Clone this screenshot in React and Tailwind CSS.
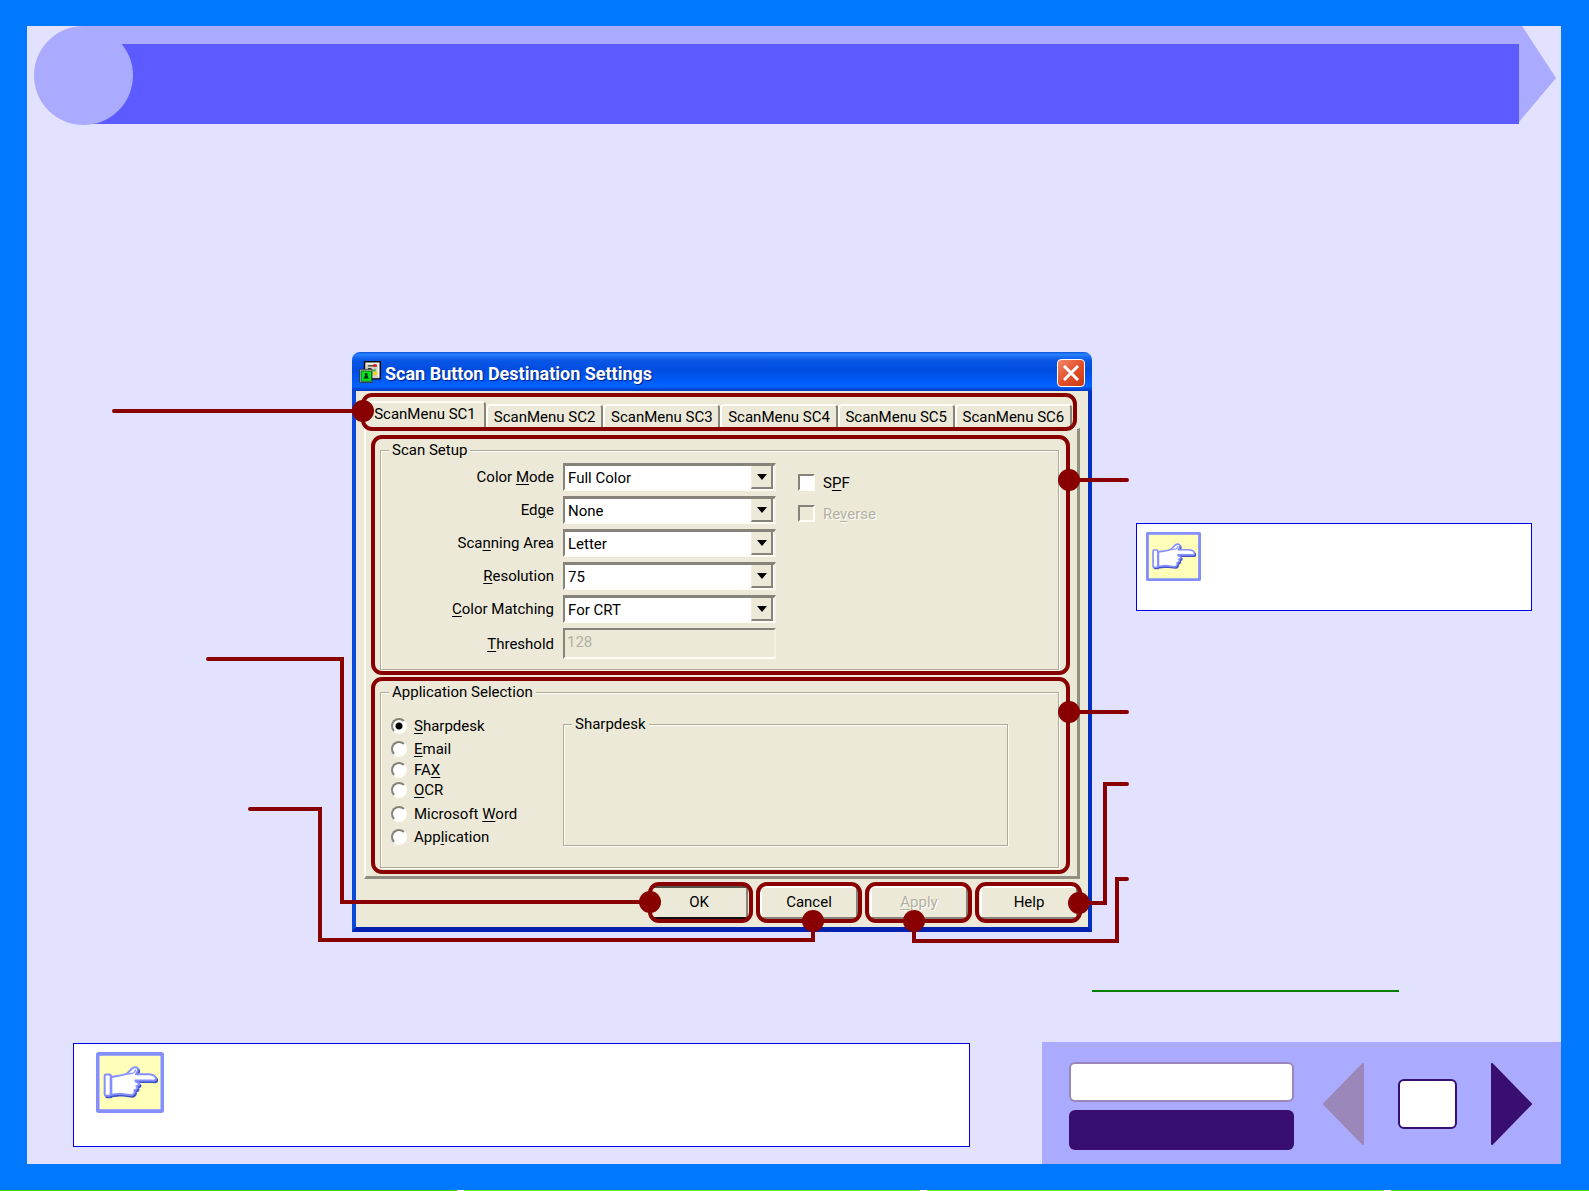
import React, { useState } from "react";

const FONT = "font-['Roboto','Liberation_Sans',sans-serif]";
const ETCHED =
  "border border-[#aeab9b] shadow-[1px_1px_0_#fffdf6,inset_1px_1px_0_#fffdf6]";

function Mnemonic({ text }) {
  const [before, key, after] = text.split("|");
  return (
    <span className="whitespace-pre">
      {before}
      <span className="underline decoration-1 underline-offset-2">{key}</span>
      {after}
    </span>
  );
}

function PointingHand({ className }) {
  const hand =
    "M154 140 C172 137 186 136 200 131 L216 115 C222 109 233 110 234 117 C234 123 231 127 228 132 L268 132 C282 134 288 140 288 146 C288 152 281 152 274 151 L226 151 C227 157 238 157 238 161 C238 166 233 167 229 168 C234 172 234 178 223 180 C227 185 222 195 214 195 L180 191 L154 194 Z";
  return (
    <svg viewBox="108 66 204 182" className={className} aria-hidden="true">
      <rect x="113" y="71" width="194" height="172" rx="3" fill="#ffffb9" stroke="#838eff" strokeWidth="11" />
      <g transform="translate(4 5)" fill="#3f52c4" stroke="#3f52c4" strokeWidth="5" strokeLinejoin="round">
        <path d={hand} />
        <rect x="134" y="133" width="17" height="64" rx="4" />
      </g>
      <g fill="#fff" stroke="#838eff" strokeWidth="6" strokeLinejoin="round">
        <path d={hand} />
        <rect x="134" y="133" width="18" height="64" rx="4" />
        <path d="M202 132 L213 130 C220 130 226 124 227 118" fill="none" strokeWidth="4" />
      </g>
    </svg>
  );
}

function AppIcon() {
  return (
    <svg viewBox="0 0 64 64" className="size-[22px]" aria-hidden="true">
      <rect x="16" y="2" width="46" height="50" fill="#d4d2c4" stroke="#0a0a0a" strokeWidth="4" />
      <path d="M22 8h34v38" stroke="#fff" strokeWidth="3" fill="none" />
      <path d="M26 14h26M26 22h10" stroke="#333" strokeWidth="4" />
      <rect x="42" y="9" width="9" height="8" fill="#e02020" />
      <path d="M38 28l10-6v11z" fill="#1fb81f" />
      <circle cx="47" cy="36" r="6" fill="#f2d21a" />
      <rect x="2" y="24" width="36" height="38" fill="#c9c7c0" stroke="#222" strokeWidth="2" />
      <rect x="6" y="29" width="30" height="30" fill="#08e022" stroke="#064d0c" strokeWidth="2" />
      <path d="M21 35a4 4 0 0 1 3 7l5 9H13l5-9a4 4 0 0 1 3-7z" fill="#042f06" />
    </svg>
  );
}

function ComboRow({ id, label, value }) {
  return (
    <>
      <label htmlFor={id} className="justify-self-end">
        <Mnemonic text={label} />
      </label>
      <div className="relative">
        <select
          id={id}
          defaultValue={value}
          className="block h-7 w-full appearance-none rounded-none border-2 border-t-[3px] border-r-[#f7f2e8] border-b-[#fffdf6] border-l-[#86837a] border-t-[#86837a] bg-white pl-[3px] text-[15px] leading-5 text-black outline-none"
        >
          <option>{value}</option>
        </select>
        <span className="pointer-events-none absolute top-[3px] right-[3px] flex h-[23px] w-[22px] items-center justify-center border-r-2 border-b-2 border-l border-l-[#f7e9dc] border-r-[#86837a] border-b-[#86837a] bg-[#ece9d8]">
          <svg viewBox="0 0 10 6" className="h-[6px] w-[10px]" aria-hidden="true">
            <path d="M0 0h10L5 6z" fill="#000" />
          </svg>
        </span>
      </div>
    </>
  );
}

function CheckRow({ label, disabled }) {
  return (
    <label
      className={
        "flex h-[31px] items-center gap-2 " +
        (disabled ? "text-[#b3b0a0] [text-shadow:1px_1px_0_#fff]" : "text-black")
      }
    >
      <input
        type="checkbox"
        disabled={disabled}
        className="size-[17px] appearance-none border-2 border-t-[#86837a] border-r-[#fffdf6] border-b-[#fffdf6] border-l-[#86837a] bg-white disabled:bg-[#ece9d8]"
      />
      <Mnemonic text={label} />
    </label>
  );
}

const COMBOS = [
  ["color-mode", "Color |M|ode", "Full Color"],
  ["edge", "Ed|g|e", "None"],
  ["area", "Sca|n|ning Area", "Letter"],
  ["resolution", "|R|esolution", "75"],
  ["matching", "|C|olor Matching", "For CRT"],
];

const APPS = [
  ["|S|harpdesk", "h-[23px]"],
  ["|E|mail", "h-[23px]"],
  ["FA|X|", "h-5"],
  ["|O|CR", "h-5"],
  ["Microsoft |W|ord", "mt-0.5 h-[23px]"],
  ["App|l|ication", "h-[23px]"],
];

const TABS = ["SC1", "SC2", "SC3", "SC4", "SC5", "SC6"];

function DialogButton({ children, primary, disabled }) {
  return (
    <button
      type="button"
      disabled={disabled}
      className={
        "flex h-[33px] w-[98px] items-center justify-center border-2 border-r-[#86837a] border-l-white bg-[#ece9d8] pb-0.5 text-[15px] " +
        (primary ? "border-t-[#55524a] border-b-[#111] " : "border-t-white border-b-[#86837a] ") +
        (disabled ? "text-[#b3b0a0] [text-shadow:1px_1px_0_#fff]" : "text-black")
      }
    >
      {children}
    </button>
  );
}

/* Outlines, dots and leader lines that point from the dialog to its notes. */
function Callouts() {
  return (
    <svg className="pointer-events-none absolute top-0 left-0 h-full w-full overflow-visible" aria-hidden="true">
      <g transform="translate(-352 -352)" fill="none" stroke="#880000" strokeWidth="4" strokeLinecap="round">
        <rect x="363" y="395" width="712" height="34" rx="9" />
        <rect x="373" y="437" width="695" height="236" rx="9" />
        <rect x="373" y="679" width="695" height="193" rx="9" />
        <rect x="650" y="884" width="101" height="37" rx="9" />
        <rect x="758" y="884" width="102" height="37" rx="9" />
        <rect x="867" y="884" width="103" height="37" rx="9" />
        <rect x="977" y="884" width="103" height="37" rx="9" />
        <path d="M114 411H363M1069 480H1127M1069 712H1127" />
        <path d="M208 659H342V902H650" />
        <path d="M250 809H320V940H813V921" />
        <path d="M914 921V941H1117V879H1127" />
        <path d="M1079 903H1105V784H1127" />
        <g fill="#880000" stroke="none">
          <circle cx="363" cy="411" r="11" />
          <circle cx="1069" cy="480" r="11" />
          <circle cx="1069" cy="712" r="11" />
          <circle cx="650" cy="902" r="11" />
          <circle cx="813" cy="921" r="11" />
          <circle cx="914" cy="921" r="11" />
          <circle cx="1079" cy="903" r="11" />
        </g>
      </g>
    </svg>
  );
}

function SettingsDialog() {
  const [tab, setTab] = useState(0);
  return (
    <div className={"relative w-[740px] shrink-0 text-[15px] leading-5 text-black " + FONT}>
      <div className="flex h-[39px] items-center gap-1 rounded-t-lg bg-[linear-gradient(180deg,#0a55d8_0%,#2a80ff_6%,#0a58e6_20%,#004ce0_45%,#0058f6_70%,#0064ff_88%,#0038c0_100%)] px-[7px]">
        <AppIcon />
        <h1 className="flex-1 pt-1 text-[18px] leading-6 font-bold text-white [text-shadow:1px_1px_1px_#0a1e80]">
          Scan Button Destination Settings
        </h1>
        <button
          type="button"
          aria-label="Close"
          className="mt-0.5 flex size-7 items-center justify-center rounded border border-white bg-[linear-gradient(135deg,#f08a6c,#e2502c_50%,#c83a10)]"
        >
          <svg viewBox="0 0 16 16" className="size-4" aria-hidden="true">
            <path d="M1 1L15 15M15 1L1 15" stroke="#fff" strokeWidth="3" />
          </svg>
        </button>
      </div>
      <div className="border-x-4 border-b-[5px] border-r-[#0030c0] border-b-[#0020b0] border-l-[#0a48dc] bg-[#ece9d8] px-2">
        <div role="tablist" className="flex h-[37px] items-end pr-2">
          {TABS.map((name, i) => (
            <button
              key={name}
              type="button"
              role="tab"
              aria-selected={tab === i}
              onClick={() => setTab(i)}
              className={
                "rounded-t-sm border-t-2 border-r-2 border-l-2 border-t-[#fffdf6] border-r-[#86837a] border-l-[#fffdf6] whitespace-nowrap " +
                (i === 0 ? "w-[122px] " : "flex-1 ") +
                (tab === i ? "h-[27px] pb-1" : "h-[24px]")
              }
            >
              ScanMenu {name}
            </button>
          ))}
        </div>
        <div role="tabpanel" className="border-t border-r-[3px] border-b-[3px] border-l-2 border-t-[#fffdf6] border-r-[#918e82] border-b-[#918e82] border-l-[#fffdf6] pt-[11px] pr-[18px] pb-2 pl-3.5">
          <fieldset className={"flex h-[230px] items-start pt-[3px] " + ETCHED}>
            <legend className="ml-2 bg-[#ece9d8] px-[3px]">Scan Setup</legend>
            <div className="grid grid-cols-[173px_213px] items-center gap-x-[9px] gap-y-[5px]">
              {COMBOS.map(([id, label, value]) => (
                <ComboRow key={id} id={id} label={label} value={value} />
              ))}
              <label htmlFor="threshold" className="justify-self-end">
                <Mnemonic text="|T|hreshold" />
              </label>
              <input
                id="threshold"
                disabled
                defaultValue="128"
                className="h-[31px] w-full border-2 border-t-[#86837a] border-r-[#f7f2e8] border-b-[#fffdf6] border-l-[#86837a] bg-[#ece9d8] pb-1 pl-0.5 text-[#b3b0a0]"
              />
            </div>
            <div className="mt-1 ml-[22px]">
              <CheckRow label="S|P|F" />
              <CheckRow label="Re|v|erse" disabled />
            </div>
          </fieldset>
          <fieldset className={"mt-3 flex h-[186px] items-start " + ETCHED}>
            <legend className="ml-2 bg-[#ece9d8] px-[3px]">Application Selection</legend>
            <div className="w-[182px] pt-3 pl-2.5">
              {APPS.map(([label, size], i) => (
                <label key={label} className={"flex items-center gap-[7px] " + size}>
                  <input
                    type="radio"
                    name="application"
                    defaultChecked={i === 0}
                    className="size-4 appearance-none rounded-full border-2 border-t-[#86837a] border-r-[#fffdf6] border-b-[#fffdf6] border-l-[#86837a] bg-white checked:bg-[radial-gradient(circle,#000_3px,#fff_4px)]"
                  />
                  <Mnemonic text={label} />
                </label>
              ))}
            </div>
            <fieldset className={"mt-3 h-[132px] w-[445px] " + ETCHED}>
              <legend className="ml-2 bg-[#ece9d8] px-[3px]">Sharpdesk</legend>
            </fieldset>
          </fieldset>
        </div>
        <div className="flex justify-end gap-3 pt-[7px] pr-0.5 pb-2">
          <DialogButton primary>OK</DialogButton>
          <DialogButton>Cancel</DialogButton>
          <DialogButton disabled>
            <Mnemonic text="|A|pply" />
          </DialogButton>
          <DialogButton>Help</DialogButton>
        </div>
      </div>
      <Callouts />
    </div>
  );
}

function Banner() {
  return (
    <header className="flex h-[100px] pr-[5px] pl-[7px]">
      <div className="z-10 size-[99px] shrink-0 rounded-full bg-[#aaaaff]" />
      <div className="-ml-[50px] h-[98px] flex-1 border-t-[18px] border-[#aaaaff] bg-[#5b5bff]" />
      <svg viewBox="0 0 37 98" className="h-[98px] w-[37px] shrink-0" aria-hidden="true">
        <path d="M0 0H3L37 52L0 96Z" fill="#aaaaff" />
      </svg>
    </header>
  );
}

function PageNav() {
  return (
    <nav className="flex w-[519px] shrink-0 items-center bg-[#aaaaff] pr-[29px] pl-[27px]">
      <div className="mt-1.5 mr-[29px] flex w-[225px] flex-col gap-2">
        <button type="button" aria-label="Contents" className="h-10 rounded-md border-2 border-[#9b87b9] bg-white" />
        <button type="button" aria-label="Index" className="h-10 rounded-md bg-[#380f70]" />
      </div>
      <button type="button" aria-label="Previous page" className="mt-0.5">
        <svg viewBox="0 0 41 82" className="h-[82px] w-[41px]" aria-hidden="true">
          <path d="M1 41L40 1V81Z" fill="#9b87b9" stroke="#9b87b9" strokeWidth="2" strokeLinejoin="round" />
        </svg>
      </button>
      <div className="mx-auto mt-0.5 h-[50px] w-[59px] rounded-md border-2 border-[#380f70] bg-white" />
      <button type="button" aria-label="Next page" className="mt-0.5">
        <svg viewBox="0 0 41 82" className="h-[82px] w-[41px]" aria-hidden="true">
          <path d="M40 41L1 1V81Z" fill="#380f70" stroke="#380f70" strokeWidth="2" strokeLinejoin="round" />
        </svg>
      </button>
    </nav>
  );
}

export default function App() {
  return (
    <div className="flex min-h-screen flex-col bg-[#0078ff]">
      <div className="mt-[26px] mr-7 mb-[26px] ml-[27px] flex flex-1 flex-col bg-[#e2e2ff]">
        <Banner />
        <main className="mt-[226px] flex items-start pl-[325px]">
          <SettingsDialog />
          <aside className="mt-[171px] mr-[29px] ml-11 h-[88px] flex-1 border border-[#0000e8] bg-white pt-2 pl-[9px]">
            <PointingHand className="h-[49px] w-[55px]" />
          </aside>
        </main>
        <div className="mt-[58px] ml-[1065px] h-0.5 w-[307px] bg-[#007f00]" />
        <footer className="mt-auto flex h-[122px] items-stretch">
          <div className="mt-px mr-[72px] mb-[17px] ml-[46px] flex-1 border border-[#0000e8] bg-white pt-2 pl-[22px]">
            <PointingHand className="h-[61px] w-[68px]" />
          </div>
          <PageNav />
        </footer>
      </div>
      <div className="flex h-px gap-[7px] bg-white">
        <div className="flex-1 bg-[#45d000]" />
        <div className="flex-1 bg-[#70f018]" />
        <div className="flex-1 bg-[#70f018]" />
        <div className="w-[198px] bg-[#55dc10]" />
      </div>
    </div>
  );
}
